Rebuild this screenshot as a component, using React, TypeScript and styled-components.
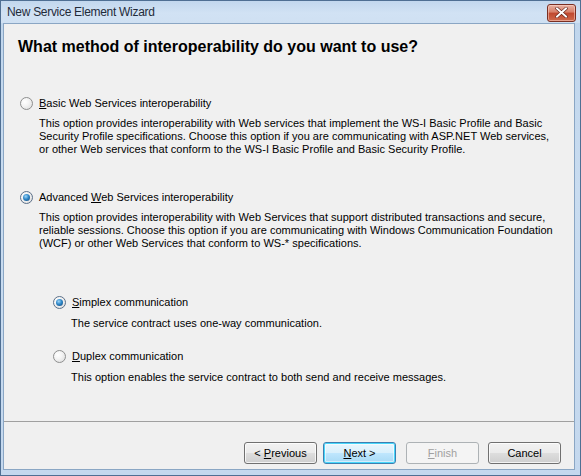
import React from "react";
import styled, { createGlobalStyle, css } from "styled-components";

const GlobalStyle = createGlobalStyle`
  html, body { margin: 0; padding: 0; background: #ffffff; }
  #root { width: 581px; height: 476px; }
`;

const uiFont = `"Liberation Sans", Arial, sans-serif`;

const Window = styled.div`
  width: 581px;
  height: 476px;
  box-sizing: border-box;
  display: flex;
  flex-direction: column;
  background: linear-gradient(180deg, #bfd5ec 0%, #c9dcf0 40%, #c4d8ee 100%);
  border: 1px solid #4f6f93;
  font-family: ${uiFont};
`;

const TitleBar = styled.div`
  height: 22px;
  flex: none;
  display: flex;
  align-items: center;
  justify-content: space-between;
  padding: 0 4px 0 6px;
  background: linear-gradient(180deg, #c2d7ee 0%, #d1e2f4 55%, #cfe0f2 100%);
`;

const TitleText = styled.span`
  font-size: 12px;
  color: #1f2b3a;
  letter-spacing: -0.3px;
`;

const CloseButton = styled.div`
  width: 27px;
  height: 16px;
  margin-top: 1px;
  border: 1px solid #7a2f22;
  border-radius: 3px;
  display: flex;
  align-items: center;
  justify-content: center;
  background: linear-gradient(180deg, #e8b1a2 0%, #d77f68 45%, #c0482e 50%, #cf6a4c 100%);
  box-shadow: inset 0 0 0 1px rgba(255, 220, 210, 0.5);
`;

const ClientArea = styled.div`
  flex: 1;
  display: flex;
  flex-direction: column;
  margin: 0 5px 5px 2px;
  background: #f0f0f0;
  border: 1px solid #8aa6c4;
`;

const Body = styled.div`
  flex: 1;
  padding: 13px 0 0 14px;
  color: #000;
`;

const Heading = styled.h1`
  margin: 0 0 39px 0;
  font-family: ${uiFont};
  font-size: 16px;
  line-height: 20px;
  font-weight: bold;
  letter-spacing: 0;
  color: #000;
`;

const Option = styled.div<{ $indent?: number; $gap: number }>`
  margin-left: ${(p) => p.$indent ?? 2}px;
  margin-top: ${(p) => p.$gap}px;
`;

const RadioRow = styled.label`
  display: flex;
  align-items: center;
  height: 14px;
  font-size: 11px;
  line-height: 14px;
  color: #000;
`;

const RadioCircle = styled.span<{ $checked?: boolean }>`
  width: 11px;
  height: 11px;
  border-radius: 50%;
  flex: none;
  margin-right: 6px;
  border: 1px solid #8e8f8f;
  background: radial-gradient(circle at 35% 35%, #ffffff 0%, #f4f4f4 40%, #d8d8d8 100%);
  position: relative;
  ${(p) =>
    p.$checked &&
    css`
      border-color: #5c7089;
      &::after {
        content: "";
        position: absolute;
        left: 2px;
        top: 2px;
        width: 7px;
        height: 7px;
        border-radius: 50%;
        background: radial-gradient(circle at 40% 35%, #9fd6f7 0%, #2f88c9 45%, #0f3f70 100%);
      }
    `}
`;

const Key = styled.span`
  text-decoration: underline;
  text-underline-offset: 1px;
`;

const Description = styled.p<{ $top: number; $left: number }>`
  margin: ${(p) => p.$top}px 0 0 ${(p) => p.$left}px;
  font-size: 11px;
  line-height: 13px;
  color: #000;
  letter-spacing: 0.02px;
`;

const Footer = styled.div`
  flex: none;
  height: 48px;
  border-top: 1px solid #a0a0a0;
  display: flex;
  align-items: flex-start;
  justify-content: flex-end;
  padding: 20px 13px 0 0;
  box-sizing: border-box;
`;

const Button = styled.button<{ $variant?: "default" | "disabled"; $gap?: number }>`
  width: 73px;
  height: 22px;
  margin-left: ${(p) => p.$gap ?? 0}px;
  padding: 0;
  font-family: ${uiFont};
  font-size: 11px;
  color: #000;
  border: 1px solid #707070;
  border-radius: 3px;
  background: linear-gradient(180deg, #f2f2f2 0%, #ebebeb 48%, #dddddd 52%, #cfcfcf 100%);
  box-shadow: inset 0 0 0 1px rgba(255, 255, 255, 0.75);
  ${(p) =>
    p.$variant === "default" &&
    css`
      border-color: #3c7fb1;
      box-shadow: inset 0 0 0 1px #48d7fb, inset 0 0 0 2px rgba(255, 255, 255, 0.5);
      background: linear-gradient(180deg, #eaf6fd 0%, #d9f0fc 48%, #bee6fd 52%, #a7d9f5 100%);
    `}
  ${(p) =>
    p.$variant === "disabled" &&
    css`
      color: #a0a0a0;
      border-color: #adb2b5;
      background: #f4f4f4;
      box-shadow: none;
    `}
`;

export default function App() {
  return (
    <>
      <GlobalStyle />
      <Window>
        <TitleBar>
          <TitleText>New Service Element Wizard</TitleText>
          <CloseButton>
            <svg width="13" height="11" viewBox="0 0 13 11">
              <path
                d="M2 1.5 L11 9.5 M11 1.5 L2 9.5"
                stroke="#5a1a10"
                strokeWidth="3.2"
                strokeLinecap="square"
              />
              <path
                d="M2 1.5 L11 9.5 M11 1.5 L2 9.5"
                stroke="#ffffff"
                strokeWidth="2"
                strokeLinecap="square"
              />
            </svg>
          </CloseButton>
        </TitleBar>
        <ClientArea>
          <Body>
            <Heading>What method of interoperability do you want to use?</Heading>

            <Option $gap={0}>
              <RadioRow>
                <RadioCircle />
                <span>
                  <Key>B</Key>asic Web Services interoperability
                </span>
              </RadioRow>
              <Description $top={7} $left={19}>
                This option provides interoperability with Web services that implement the WS-I Basic Profile and Basic
                <br />
                Security Profile specifications. Choose this option if you are communicating with ASP.NET Web services,
                <br />
                or other Web services that conform to the WS-I Basic Profile and Basic Security Profile.
              </Description>
            </Option>

            <Option $gap={34}>
              <RadioRow>
                <RadioCircle $checked />
                <span>
                  Advanced <Key>W</Key>eb Services interoperability
                </span>
              </RadioRow>
              <Description $top={7} $left={19}>
                This option provides interoperability with Web Services that support distributed transactions and secure,
                <br />
                reliable sessions. Choose this option if you are communicating with Windows Communication Foundation
                <br />
                (WCF) or other Web Services that conform to WS-* specifications.
              </Description>
            </Option>

            <Option $gap={45} $indent={35}>
              <RadioRow>
                <RadioCircle $checked />
                <span>
                  <Key>S</Key>implex communication
                </span>
              </RadioRow>
              <Description $top={8} $left={18}>
                The service contract uses one-way communication.
              </Description>
            </Option>

            <Option $gap={19} $indent={35}>
              <RadioRow>
                <RadioCircle />
                <span>
                  <Key>D</Key>uplex communication
                </span>
              </RadioRow>
              <Description $top={8} $left={18}>
                This option enables the service contract to both send and receive messages.
              </Description>
            </Option>
          </Body>

          <Footer>
            <Button>
              &lt; <Key>P</Key>revious
            </Button>
            <Button $variant="default" $gap={6}>
              <Key>N</Key>ext &gt;
            </Button>
            <Button $variant="disabled" $gap={10}>
              <Key>F</Key>inish
            </Button>
            <Button $gap={9}>Cancel</Button>
          </Footer>
        </ClientArea>
      </Window>
    </>
  );
}
